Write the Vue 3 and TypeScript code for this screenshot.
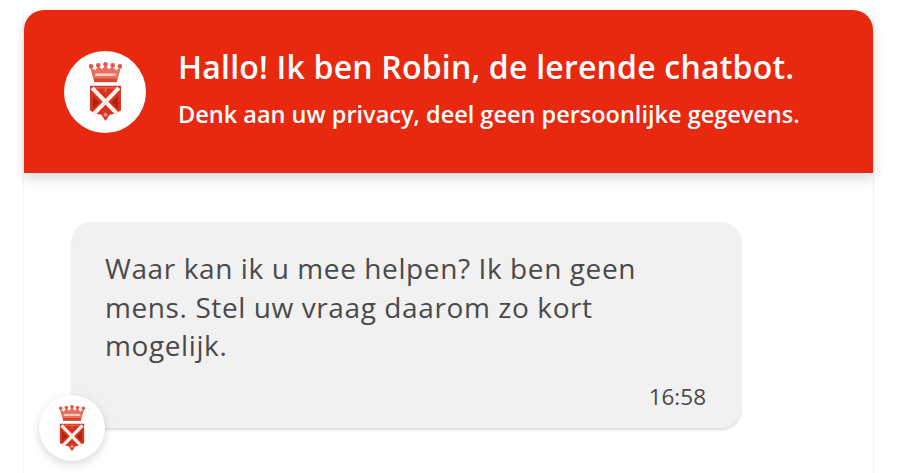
<template>
  <div class="page">
    <div class="chat">
      <header class="chat-header">
        <div class="logo-round">
          <svg class="crest" viewBox="0 0 32 58">
            <use href="#crest-shape" />
          </svg>
        </div>
        <div class="header-text">
          <h1 class="title">Hallo! Ik ben Robin, de lerende chatbot.</h1>
          <p class="subtitle">Denk aan uw privacy, deel geen persoonlijke gegevens.</p>
        </div>
      </header>
      <div class="messages">
        <div class="bubble">
          <p class="message">Waar kan ik u mee helpen? Ik ben geen mens. Stel uw vraag daarom zo kort mogelijk.</p>
          <div class="time">{{ time }}</div>
          <div class="avatar">
            <svg class="crest-small" viewBox="0 0 32 58">
              <use href="#crest-shape" />
            </svg>
          </div>
        </div>
      </div>
    </div>
    <svg class="defs" width="0" height="0">
      <defs>
        <g id="crest-shape">
          <!-- crown -->
          <path d="M1 5l5 3 3-4 4 3 3-5 3 5 4-3 3 4 5-3-4 14H5z" fill="#e8705c" />
          <circle cx="2" cy="4" r="2.2" fill="#dd5a46" />
          <circle cx="9" cy="3" r="2.2" fill="#dd5a46" />
          <circle cx="16" cy="2.2" r="2.2" fill="#dd5a46" />
          <circle cx="23" cy="3" r="2.2" fill="#dd5a46" />
          <circle cx="30" cy="4" r="2.2" fill="#dd5a46" />
          <path d="M6 11h20v2.5H6z" fill="#f9cfc5" />
          <path d="M5 16h22v3.5H5z" fill="#d84530" />
          <!-- shield -->
          <path d="M1 23h30v24l-6 3-5 1-4 6-4-6-5-1-6-3z" fill="#d5331e" />
          <path d="M4 25h24M16 24v5" stroke="#ea6a55" stroke-width="1.4" />
          <path d="M3 25l25 26M29 25L4 51" stroke="#fdf0ec" stroke-width="4" />
          <path d="M4 33l6 6-6 6zM28 33l-6 6 6 6z" fill="#a9210f" />
          <circle cx="16" cy="51" r="2" fill="#f08f7e" />
        </g>
      </defs>
    </svg>
  </div>
</template>

<script setup lang="ts">
import { ref } from 'vue'

const time = ref('16:58')
</script>

<style scoped>
.page {
  height: 473px;
  padding: 10px 27px 0 24px;
  box-sizing: border-box;
  overflow: hidden;
  font-family: "Open Sans", sans-serif;
}
.chat {
  height: 100%;
  border-right: 1px solid #f1f1f1;
  border-left: 1px solid #f4f4f4;
  margin: 0 -1px;
}
.chat-header {
  display: flex;
  align-items: center;
  gap: 32px;
  height: 163px;
  padding-left: 40px;
  box-sizing: border-box;
  background: #e8290f;
  border-radius: 20px 20px 0 0;
  box-shadow: 0 6px 12px rgba(0, 0, 0, 0.14);
  color: #fff;
}
.logo-round {
  display: flex;
  align-items: center;
  justify-content: center;
  width: 82px;
  height: 82px;
  border-radius: 50%;
  background: #fff;
  flex-shrink: 0;
}
.crest {
  width: 33px;
  height: 60px;
  filter: blur(0.4px);
}
.header-text {
  margin-top: -8px;
}
.title {
  margin: 0;
  font-size: 32px;
  line-height: 42px;
  font-weight: 600;
  letter-spacing: 0.2px;
  white-space: nowrap;
}
.subtitle {
  margin: 11px 0 0;
  font-size: 23.5px;
  line-height: 30px;
  font-weight: 600;
  white-space: nowrap;
}
.messages {
  padding: 49px 0 0 48px;
}
.bubble {
  position: relative;
  width: 669px;
  height: 206px;
  padding: 27px 33px 0;
  box-sizing: border-box;
  background: #f2f1f2;
  border-radius: 20px;
  box-shadow: 0 2px 3px rgba(0, 0, 0, 0.14);
}
.message {
  margin: 0;
  width: 545px;
  font-size: 28px;
  line-height: 38.5px;
  letter-spacing: 0.6px;
  color: #4a4a4a;
}
.time {
  margin-top: 18px;
  margin-right: 2px;
  text-align: right;
  font-size: 22.5px;
  line-height: 27px;
  color: #4a4a4a;
}
.avatar {
  position: absolute;
  left: -33px;
  top: 173px;
  display: flex;
  align-items: center;
  justify-content: center;
  width: 66px;
  height: 66px;
  border-radius: 50%;
  background: #fff;
  box-shadow: 0 3px 10px rgba(0, 0, 0, 0.16);
}
.crest-small {
  width: 28px;
  height: 47px;
  filter: blur(0.4px);
}
.defs {
  position: absolute;
}
</style>

<style>
html,
body {
  margin: 0;
  background: #fff;
  overflow: hidden;
}
</style>
